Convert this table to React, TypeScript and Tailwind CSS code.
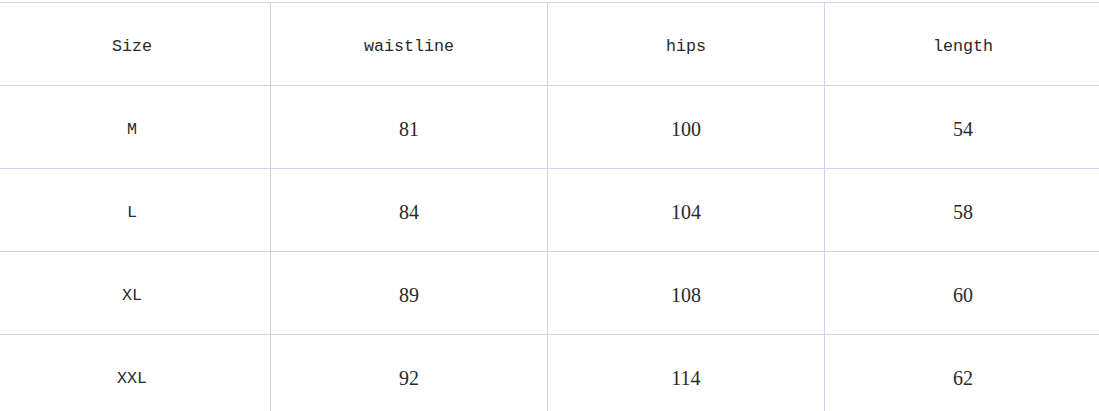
const headers = ["Size", "waistline", "hips", "length"]

const rows = [
  ["M", "81", "100", "54"],
  ["L", "84", "104", "58"],
  ["XL", "89", "108", "60"],
  ["XXL", "92", "114", "62"],
]

function Cell({ children, num }: { children: React.ReactNode; num?: boolean }) {
  return (
    <div
      className={
        num
          ? "flex h-[83px] items-center justify-center border-r border-b border-[#cfd3e3] pt-[4px] font-['Liberation_Serif',serif] text-[20px] text-[#2a2a2a]"
          : "flex h-[83px] items-center justify-center border-r border-b border-[#cfd3e3] pt-[5px] font-['Liberation_Mono',monospace] text-[16.7px] text-[#2a2a2a]"
      }
    >
      {children}
    </div>
  )
}

export default function App() {
  return (
    <div className="h-[411px] w-[1099px] overflow-hidden bg-white">
      <div className="ml-[-6px] mt-[2px] grid w-[1108px] grid-cols-4 border-t border-[#cfd3e3]">
        {headers.map((h) => (
          <Cell key={h}>{h}</Cell>
        ))}
        {rows.map((r) =>
          r.map((v, i) => (
            <Cell key={r[0] + i} num={i > 0}>
              {v}
            </Cell>
          ))
        )}
      </div>
    </div>
  )
}
